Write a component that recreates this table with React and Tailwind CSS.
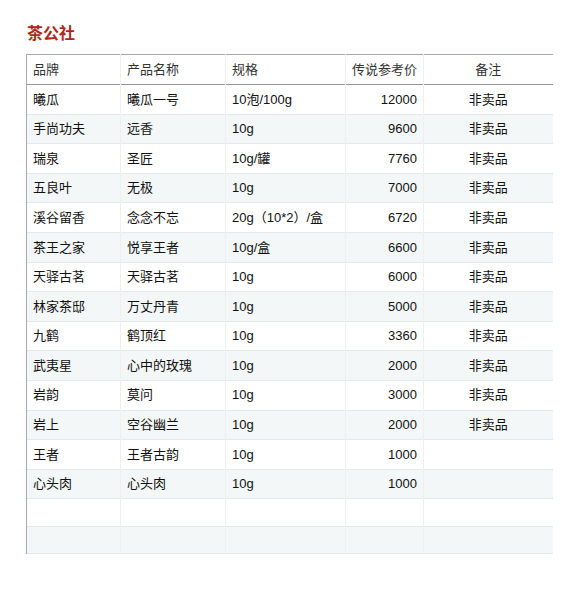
import React from 'react';

const rows = [
  ['曦瓜', '曦瓜一号', '10泡/100g', '12000', '非卖品'],
  ['手尚功夫', '远香', '10g', '9600', '非卖品'],
  ['瑞泉', '圣匠', '10g/罐', '7760', '非卖品'],
  ['五良叶', '无极', '10g', '7000', '非卖品'],
  ['溪谷留香', '念念不忘', '20g（10*2）/盒', '6720', '非卖品'],
  ['茶王之家', '悦享王者', '10g/盒', '6600', '非卖品'],
  ['天驿古茗', '天驿古茗', '10g', '6000', '非卖品'],
  ['林家茶邸', '万丈丹青', '10g', '5000', '非卖品'],
  ['九鹤', '鹤顶红', '10g', '3360', '非卖品'],
  ['武夷星', '心中的玫瑰', '10g', '2000', '非卖品'],
  ['岩韵', '莫问', '10g', '3000', '非卖品'],
  ['岩上', '空谷幽兰', '10g', '2000', '非卖品'],
  ['王者', '王者古韵', '10g', '1000', ''],
  ['心头肉', '心头肉', '10g', '1000', ''],
  ['', '', '', '', ''],
  ['', '', '', '', ''],
];

const font = { fontFamily: '"Liberation Sans", "Noto Sans CJK SC", sans-serif' };

const App = () => {
  return (
    <div className="min-h-screen bg-white pt-[24px] pl-[26px]" style={font}>
      <h1 className="text-[16px] leading-[20px] font-semibold text-[#b0281c] pl-[1px] mb-[10px]">茶公社</h1>

      <table className="table-fixed border-collapse text-[13px] text-[#111]">
        <colgroup>
          <col className="w-[94px]" />
          <col className="w-[105px]" />
          <col className="w-[120px]" />
          <col className="w-[78px]" />
          <col className="w-[129px]" />
        </colgroup>
        <thead>
          <tr className="h-[30px] border-t border-b border-t-[#aaaaaa] border-b-[#999999]">
            <th className="border-l border-l-[#aaaaaa] border-r border-r-[#eef0f0] px-[6px] text-left font-normal text-[#333]">品牌</th>
            <th className="border-r border-r-[#eef0f0] px-[6px] text-left font-normal text-[#333]">产品名称</th>
            <th className="border-r border-r-[#eef0f0] px-[6px] text-left font-normal text-[#333]">规格</th>
            <th className="border-r border-r-[#eef0f0] px-[6px] text-right font-normal text-[#333]">传说参考价</th>
            <th className="px-[6px] text-center font-normal text-[#333]">备注</th>
          </tr>
        </thead>
        <tbody>
          {rows.map((r, i) => (
            <tr
              key={i}
              className={`${r[0] ? 'h-[29.6px]' : 'h-[27.5px]'} border-b border-b-[#e4e8e8] ${i % 2 === 1 ? 'bg-[#f4f7f7]' : 'bg-white'}`}
            >
              <td className="border-l border-l-[#aaaaaa] border-r border-r-[#eef0f0] px-[6px] text-left">{r[0]}</td>
              <td className="border-r border-r-[#eef0f0] px-[6px] text-left">{r[1]}</td>
              <td className="border-r border-r-[#eef0f0] px-[6px] text-left">{r[2]}</td>
              <td className="border-r border-r-[#eef0f0] px-[6px] text-right">{r[3]}</td>
              <td className="px-[6px] text-center">{r[4]}</td>
            </tr>
          ))}
        </tbody>
      </table>
    </div>
  );
};

export default App;
